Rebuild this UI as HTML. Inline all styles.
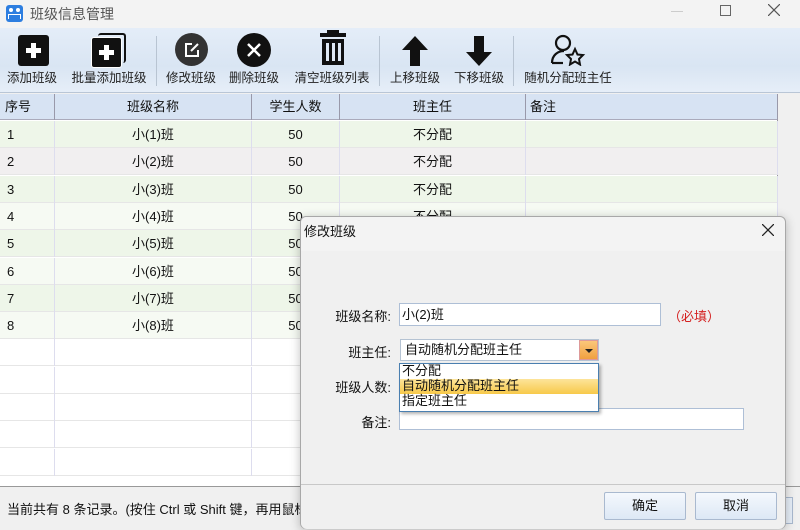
<!DOCTYPE html>
<html><head><meta charset="utf-8"><style>
*{margin:0;padding:0;box-sizing:border-box}
body{width:800px;height:530px;overflow:hidden;background:#f0f0f0;font-family:"Liberation Sans","Noto Sans CJK SC",sans-serif;font-size:13px;color:#111;position:relative}
.abs{position:absolute}
.title{left:0;top:0;width:800px;height:28px;background:#f3f3f3}
.tb{left:0;top:28px;width:800px;height:65px;background:linear-gradient(#e4edf8,#d9e5f3 60%,#e6eef8);border-bottom:1px solid #b9c6d6}
.btn{position:absolute;top:0;height:64px;text-align:center;font-size:12.5px;color:#222}
.btn .lab{position:absolute;bottom:6px;left:0;right:0;white-space:nowrap}
.sep{position:absolute;top:8px;width:1px;height:50px;background:#b8c4d2}
.hdr{top:94px;height:26px;background:#d7e3f3;border-bottom:1px solid #aab;}
.cell{position:absolute;height:27px;line-height:27px;border-right:1px solid #dde;white-space:nowrap}
.row{position:absolute;left:0;width:778px;height:27px;border-bottom:1px solid #e6e6e6}
.dlg{left:300px;top:216px;width:486px;height:313px;background:#f0f0f0;border:1px solid #a8a8a8;border-radius:6px;box-shadow:0 2px 10px rgba(0,0,0,.25)}
.inp{position:absolute;background:#fff;border:1px solid #aebfd6}
.lbl{position:absolute;width:90px;text-align:right;font-size:13px}
.b2{position:absolute;width:82px;height:28px;border:1px solid #a9b9cf;border-radius:2px;background:linear-gradient(#f4f8fd,#dde8f5);text-align:center;line-height:26px}
</style></head><body>
<div class="abs title">
 <div class="abs" style="left:6px;top:5px;width:17px;height:17px;background:#2d7ee0;border-radius:3px"></div>
 <div class="abs" style="left:9px;top:8px;width:4px;height:4px;background:#fff;border-radius:2px"></div>
 <div class="abs" style="left:16px;top:8px;width:4px;height:4px;background:#fff;border-radius:2px"></div>
 <div class="abs" style="left:8px;top:14px;width:13px;height:5px;border:1.5px solid #fff;border-bottom:none"></div>
 <div class="abs" style="left:30px;top:4px;font-size:14px;color:#555">班级信息管理</div>
 <div class="abs" style="left:671px;top:11px;width:12px;height:1px;background:#ccc"></div>
 <div class="abs" style="left:720px;top:5px;width:11px;height:11px;border:1px solid #666"></div>
 <svg class="abs" style="left:768px;top:4px" width="12" height="12" stroke="#555" stroke-width="1.2"><path d="M0 0L12 12M12 0L0 12"/></svg>
</div>
<div class="abs tb">
 <div class="btn" style="left:4px;width:56px"><div class="abs" style="left:14px;top:7px;width:31px;height:31px;background:#111;border-radius:3px"></div><div class="abs" style="left:22px;top:20px;width:15px;height:5px;background:#fff"></div><div class="abs" style="left:27px;top:15px;width:5px;height:15px;background:#fff"></div><div class="lab">添加班级</div></div>
 <div class="btn" style="left:67px;width:84px"><div class="abs" style="left:31px;top:5px;width:28px;height:30px;border:2px solid #111;border-left:none;border-bottom:none;border-radius:3px"></div><div class="abs" style="left:24px;top:9px;width:31px;height:31px;background:#111;border-radius:3px;border:1px solid #fff"></div><div class="abs" style="left:32px;top:22px;width:15px;height:5px;background:#fff"></div><div class="abs" style="left:37px;top:17px;width:5px;height:15px;background:#fff"></div><div class="lab">批量添加班级</div></div>
 <div class="sep" style="left:156px"></div>
 <div class="btn" style="left:162px;width:58px"><div class="abs" style="left:13px;top:5px;width:33px;height:33px;background:#333;border-radius:50%"></div><svg class="abs" style="left:22px;top:14px" width="16" height="16" fill="none" stroke="#fff" stroke-width="2"><path d="M8 2H2V14H14V8"/><path d="M7 9L14 2"/></svg><div class="lab">修改班级</div></div>
 <div class="btn" style="left:225px;width:58px"><div class="abs" style="left:12px;top:5px;width:34px;height:34px;background:#111;border-radius:50%"></div><svg class="abs" style="left:22px;top:15px" width="14" height="14" stroke="#fff" stroke-width="2.5"><path d="M1 1L13 13M13 1L1 13"/></svg><div class="lab">删除班级</div></div>
 <div class="btn" style="left:290px;width:84px"><div class="abs" style="left:30px;top:5px;width:26px;height:4px;background:#111"></div><div class="abs" style="left:37px;top:2px;width:12px;height:4px;background:#111"></div><div class="abs" style="left:32px;top:11px;width:22px;height:26px;background:#111"></div><div class="abs" style="left:36px;top:15px;width:3px;height:18px;background:#e0e9f5"></div><div class="abs" style="left:42px;top:15px;width:3px;height:18px;background:#e0e9f5"></div><div class="abs" style="left:48px;top:15px;width:3px;height:18px;background:#e0e9f5"></div><div class="lab">清空班级列表</div></div>
 <div class="sep" style="left:379px"></div>
 <div class="btn" style="left:386px;width:58px"><svg class="abs" style="left:16px;top:8px" width="26" height="30"><path d="M13 0L26 14H18V30H8V14H0Z" fill="#111"/></svg><div class="lab">上移班级</div></div>
 <div class="btn" style="left:450px;width:58px"><svg class="abs" style="left:16px;top:8px" width="26" height="30"><path d="M13 30L26 16H18V0H8V16H0Z" fill="#111"/></svg><div class="lab">下移班级</div></div>
 <div class="sep" style="left:513px"></div>
 <div class="btn" style="left:520px;width:96px"><svg class="abs" style="left:30px;top:6px" width="36" height="32" fill="none" stroke="#111" stroke-width="2.2"><circle cx="13" cy="9" r="7"/><path d="M2 29C2 21 8 17 14 17"/><path d="M2 29H13"/><path d="M25 15L27.5 20.5L33 21L29 25L30 30.5L25 27.5L20 30.5L21 25L17 21L22.5 20.5Z" stroke-width="2"/></svg><div class="lab">随机分配班主任</div></div>
</div>
<div class="abs" style="left:0;top:94px;width:778px;height:392px;background:#fff;border-right:1px solid #999"></div>
<div class="abs hdr" style="left:0;width:778px">
 <div class="cell" style="left:0;width:55px;padding-left:5px;height:26px;line-height:26px;border-color:#99a">序号</div>
 <div class="cell" style="left:55px;width:197px;text-align:center;height:26px;line-height:26px;border-color:#99a">班级名称</div>
 <div class="cell" style="left:252px;width:88px;text-align:center;height:26px;line-height:26px;border-color:#99a">学生人数</div>
 <div class="cell" style="left:340px;width:186px;text-align:center;height:26px;line-height:26px;border-color:#99a">班主任</div>
 <div class="cell" style="left:526px;width:252px;padding-left:4px;height:26px;line-height:26px;border-color:#99a">备注</div>
</div>
<div id="rows"></div>
<script>
var h='',bg=['#eef6e9','#f1eff0','#eef6e9','#f6faf3','#eef6e9','#f6faf3','#eef6e9','#f6faf3'];
for(var i=0;i<13;i++){var t=121+i*27.3;var b=i<8?bg[i]:'#fff';h+='<div class="row" style="top:'+t+'px;background:'+b+'">';
if(i<8){h+='<div class="cell" style="left:0;width:55px;padding-left:7px">'+(i+1)+'</div><div class="cell" style="left:55px;width:197px;text-align:center">小('+(i+1)+')班</div><div class="cell" style="left:252px;width:88px;text-align:center">50</div><div class="cell" style="left:340px;width:186px;text-align:center">不分配</div><div class="cell" style="left:526px;width:252px"></div>';}
else{h+='<div class="cell" style="left:0;width:55px"></div><div class="cell" style="left:55px;width:197px"></div><div class="cell" style="left:252px;width:88px"></div>';}
h+='</div>';}
document.getElementById('rows').outerHTML=h;
</script>
<div class="abs" style="left:0;top:486px;width:800px;height:44px;background:#f0f0f0;border-top:1px solid #999"></div>
<div class="abs" style="left:7px;top:499px;font-size:13px;white-space:nowrap">当前共有 8 条记录。(按住 Ctrl 或 Shift 键，再用鼠标</div>
<div class="abs" style="left:760px;top:497px;width:33px;height:27px;border:1px solid #a9b9cf;background:#e6eef8"></div>
<div class="abs dlg">
 <div class="abs" style="left:0;top:0;width:484px;height:34px;background:#f3f3f3;border-radius:6px 6px 0 0"></div>
 <div class="abs" style="left:3px;top:4px;font-size:13px">修改班级</div>
 <svg class="abs" style="left:461px;top:7px" width="12" height="12" stroke="#222" stroke-width="1.3"><path d="M0 0L12 12M12 0L0 12"/></svg>
 <div class="lbl" style="left:0;top:89px">班级名称:</div>
 <div class="inp" style="left:98px;top:86px;width:262px;height:23px;padding-left:2px;line-height:21px">小(2)班</div>
 <div class="abs" style="left:367px;top:89px;color:#d42020">（必填）</div>
 <div class="lbl" style="left:0;top:125px">班主任:</div>
 <div class="inp" style="left:99px;top:122px;width:199px;height:22px;padding-left:4px;line-height:20px;border-color:#b5c3d3">自动随机分配班主任</div>
 <div class="abs" style="left:278px;top:123px;width:19px;height:20px;background:linear-gradient(#fbc77a,#f0a040);border:1px solid #d99;"><div class="abs" style="left:5px;top:8px;border:4px solid transparent;border-top:4px solid #222;border-bottom:none"></div></div>
 <div class="lbl" style="left:0;top:160px">班级人数:</div>
 <div class="lbl" style="left:0;top:195px">备注:</div>
 <div class="inp" style="left:98px;top:191px;width:345px;height:22px"></div>
 <div class="abs" style="left:98px;top:146px;width:200px;height:49px;background:#fff;border:1px solid #4a7fb0;box-shadow:2px 2px 3px rgba(0,0,0,.3);font-size:13px;line-height:14px">
  <div style="height:15px;padding-left:2px">不分配</div>
  <div style="height:15px;padding-left:2px;background:linear-gradient(#fde49a,#f7c94a)">自动随机分配班主任</div>
  <div style="height:15px;padding-left:2px">指定班主任</div>
 </div>
 <div class="abs" style="left:0;top:267px;width:484px;height:1px;background:#c8c8c8"></div>
 <div class="abs" style="left:0;top:268px;width:484px;height:44px;background:#f0f0f0;border-radius:0 0 6px 6px"></div>
 <div class="b2" style="left:303px;top:275px">确定</div>
 <div class="b2" style="left:394px;top:275px">取消</div>
</div>
</body></html>
